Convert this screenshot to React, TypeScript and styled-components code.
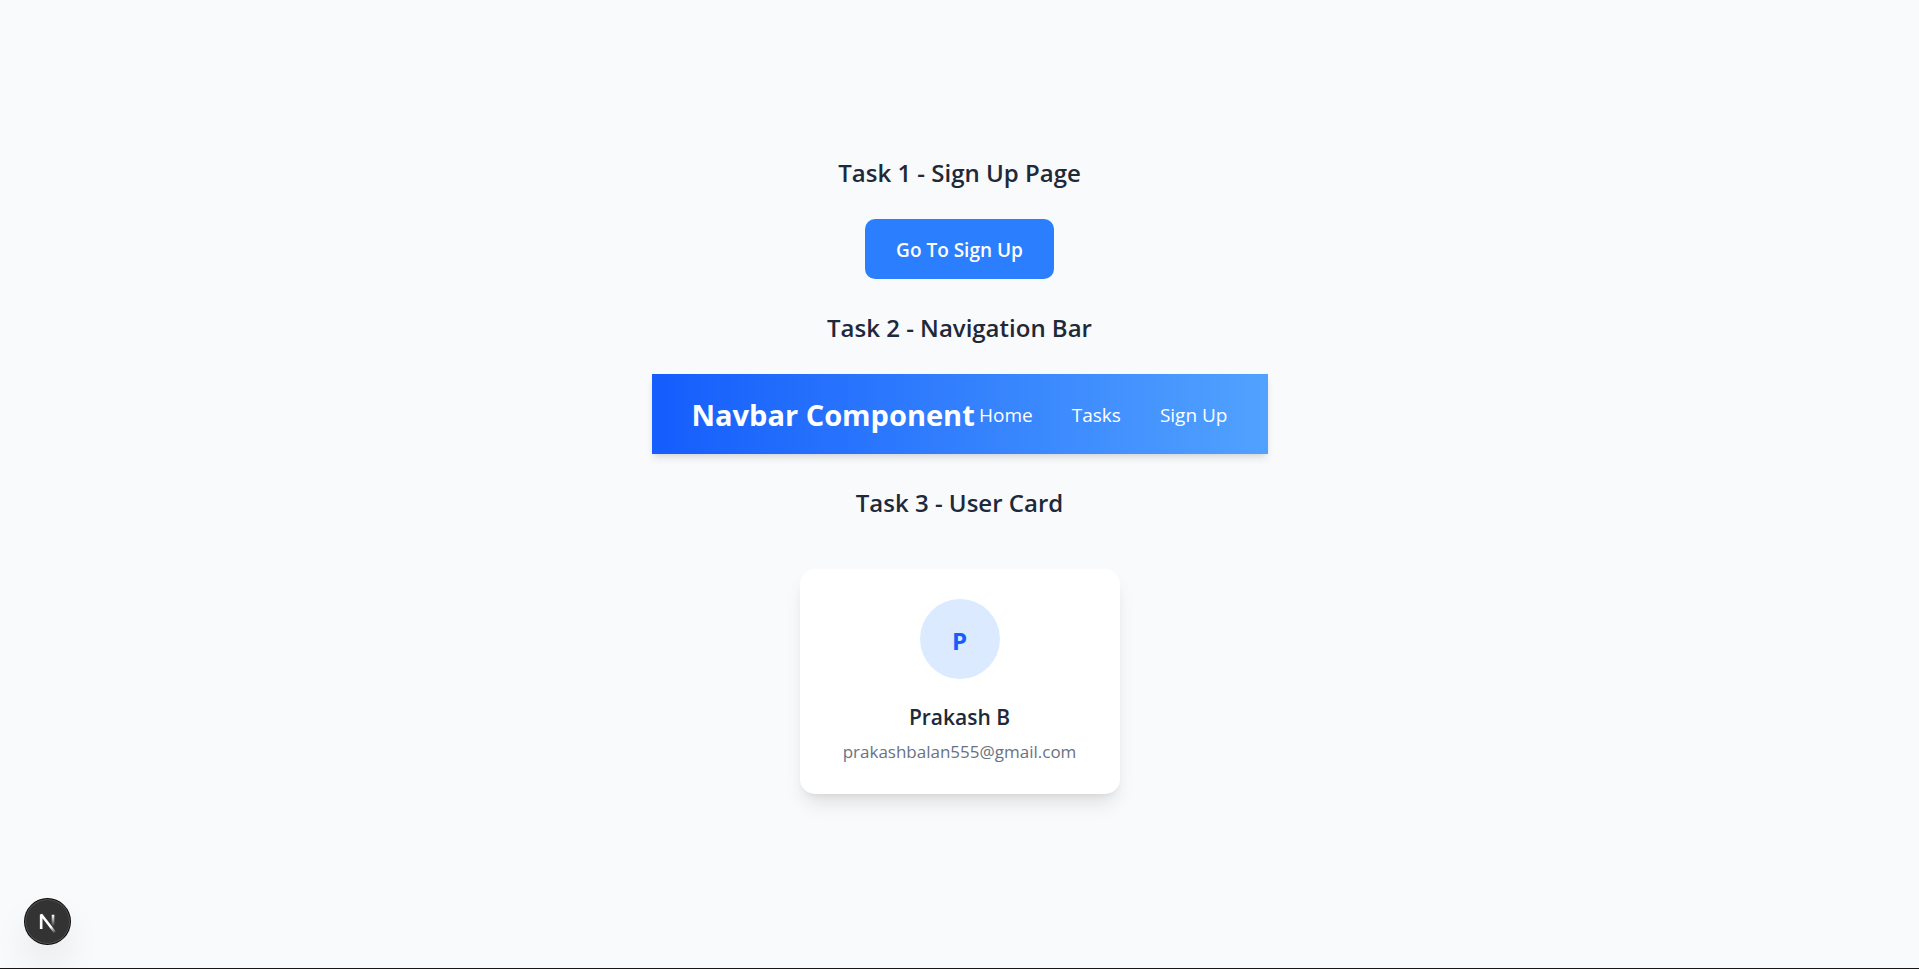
import React from "react";
import styled, { createGlobalStyle } from "styled-components";

const GlobalStyle = createGlobalStyle`
  *, *::before, *::after { box-sizing: border-box; }
  body {
    margin: 0;
    background: #f9fafb;
    color: #1e2939;
    font-family: "Segoe UI", "Open Sans", "Noto Sans", sans-serif;
  }
  h1, h2, h3, p, ul { margin: 0; padding: 0; }
`;

const Page = styled.div`
  min-height: 100vh;
  display: flex;
  flex-direction: column;
  border-bottom: 1px solid #171717;
`;

const Main = styled.main`
  flex: 1;
  display: flex;
  flex-direction: column;
  align-items: center;
  justify-content: center;
  gap: 30px;
`;

const Heading = styled.h2`
  padding-top: 2px;
  font-size: 24px;
  line-height: 33px;
  font-weight: 600;
  text-align: center;
`;

const PrimaryButton = styled.button`
  border: 0;
  border-radius: 10px;
  padding: 16px 31px 14px;
  background: #2b7fff;
  color: #fff;
  font-family: inherit;
  font-size: 19px;
  line-height: 30px;
  font-weight: 600;
  cursor: pointer;
`;

const Navbar = styled.nav`
  width: 100%;
  max-width: 616px;
  display: flex;
  align-items: center;
  justify-content: space-between;
  padding: 21px 40px 19px;
  background: linear-gradient(to right, #155dfc, #51a2ff);
  color: #fff;
  box-shadow: 0 5px 8px -1px rgba(0, 0, 0, 0.1), 0 3px 5px -3px rgba(0, 0, 0, 0.1);
`;

const Brand = styled.h1`
  font-size: 29px;
  line-height: 40px;
  font-weight: 700;
  white-space: nowrap;
`;

const NavList = styled.ul`
  display: flex;
  gap: 39px;
  list-style: none;
`;

const NavLink = styled.a`
  color: #fff;
  font-size: 19px;
  line-height: 30px;
  text-decoration: none;
  white-space: nowrap;
`;

const Card = styled.article`
  width: 320px;
  margin: 20px;
  padding: 30px;
  display: flex;
  flex-direction: column;
  align-items: center;
  border-radius: 15px;
  background: #fff;
  box-shadow: 0 13px 19px -4px rgba(0, 0, 0, 0.1), 0 5px 8px -5px rgba(0, 0, 0, 0.1);
`;

const Avatar = styled.div`
  width: 80px;
  height: 80px;
  margin-bottom: 20px;
  padding-top: 2px;
  display: flex;
  align-items: center;
  justify-content: center;
  border-radius: 50%;
  background: #dbeafe;
  color: #155dfc;
  font-size: 24px;
  line-height: 33px;
  font-weight: 700;
`;

const UserName = styled.h3`
  padding-top: 2px;
  font-size: 21px;
  line-height: 33px;
  font-weight: 600;
`;

const Email = styled.p`
  margin-top: 5px;
  color: #6a7282;
  font-size: 17px;
  line-height: 25px;
`;

const DevBadge = styled.button`
  position: fixed;
  left: 25px;
  bottom: 25px;
  width: 45px;
  height: 45px;
  padding: 0;
  display: flex;
  align-items: center;
  justify-content: center;
  border: 0;
  border-radius: 50%;
  background: #333;
  box-shadow: 0 0 0 1px #0a0a0a, inset 0 0 0 1px rgba(255, 255, 255, 0.14),
    0 20px 40px -10px rgba(0, 0, 0, 0.24);
  cursor: pointer;
`;

const links = ["Home", "Tasks", "Sign Up"];

const NextMark = () => (
  <svg width="45" height="45" viewBox="0 0 36 36" fill="none" aria-hidden="true">
    <defs>
      <linearGradient id="diagonal" x1="9.96" y1="11.12" x2="13.8" y2="16" gradientUnits="userSpaceOnUse">
        <stop stopColor="#fff" />
        <stop offset="1" stopColor="#fff" stopOpacity="0" />
      </linearGradient>
      <linearGradient id="stem" x1="11.82" y1="1.4" x2="11.79" y2="10.5" gradientUnits="userSpaceOnUse">
        <stop stopColor="#fff" />
        <stop offset="1" stopColor="#fff" stopOpacity="0" />
      </linearGradient>
    </defs>
    <g transform="translate(10.6 11.4)">
      <path d="M13.3 15.2 L2.34 1 V12.6" stroke="url(#diagonal)" strokeWidth="2.1" strokeLinejoin="bevel" />
      <path d="M11.825 1.2 V13.1" stroke="url(#stem)" strokeWidth="2.1" />
    </g>
  </svg>
);

export default function App() {
  return (
    <>
      <GlobalStyle />
      <Page>
        <Main>
          <Heading>Task 1 - Sign Up Page</Heading>
          <PrimaryButton type="button">Go To Sign Up</PrimaryButton>
          <Heading>Task 2 - Navigation Bar</Heading>
          <Navbar>
            <Brand>Navbar Component</Brand>
            <NavList>
              {links.map((label) => (
                <li key={label}>
                  <NavLink href="#">{label}</NavLink>
                </li>
              ))}
            </NavList>
          </Navbar>
          <Heading>Task 3 - User Card</Heading>
          <Card>
            <Avatar>P</Avatar>
            <UserName>Prakash B</UserName>
            <Email>prakashbalan555@gmail.com</Email>
          </Card>
        </Main>
        <DevBadge type="button" aria-label="Open Next.js Dev Tools">
          <NextMark />
        </DevBadge>
      </Page>
    </>
  );
}
